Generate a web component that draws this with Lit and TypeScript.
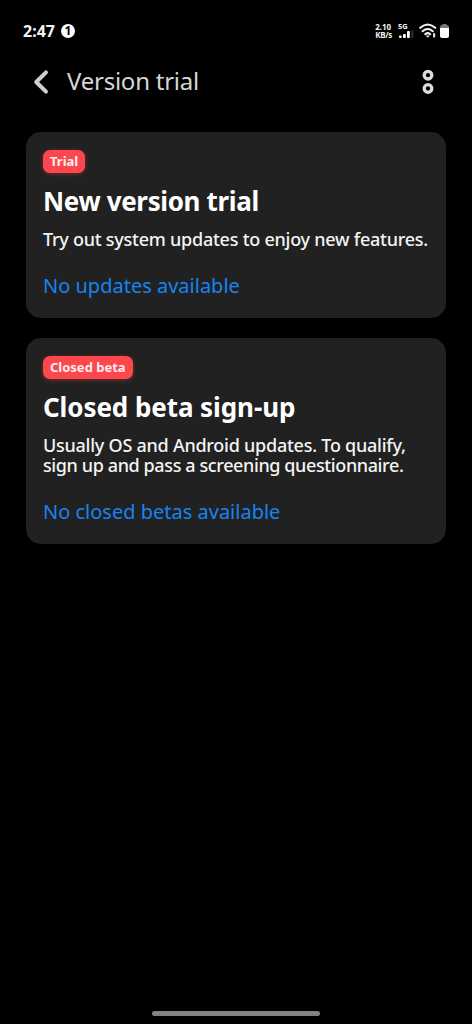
import { LitElement, html, css } from "lit";
import { customElement, property } from "lit/decorators.js";

@customElement("trial-card")
class TrialCard extends LitElement {
  @property() tag = "";
  @property() heading = "";
  @property({ attribute: false }) lines: string[] = [];
  @property() status = "";

  static styles = css`
    :host {
      display: flex;
      flex-direction: column;
      align-items: flex-start;
      box-sizing: border-box;
      background: #212121;
      border-radius: 15px;
      padding: 18px 17px 18px;
      color: #fff;
      white-space: nowrap;
    }
    .tag {
      height: 23px;
      padding: 0 7px;
      border-radius: 7px;
      background: #fd474e;
      box-shadow: 0 1px 4px rgba(253, 71, 78, 0.4);
      color: #ffeeee;
      font-size: 13px;
      font-weight: 700;
      line-height: 23px;
    }
    .heading {
      margin: 10px 0 0;
      font-size: 26px;
      font-weight: 700;
      line-height: 36px;
    }
    :host(:first-child) .heading {
      letter-spacing: -0.36px;
    }
    :host(:last-child) .heading {
      letter-spacing: -0.08px;
    }
    .text {
      margin: 10px 0 0;
      color: #f4f4f4;
      font-size: 18px;
      font-weight: 500;
      line-height: 20.5px;
      letter-spacing: -0.25px;
    }
    .line {
      display: block;
    }
    .line + .line {
      letter-spacing: -0.39px;
    }
    .status {
      margin-top: 22px;
      color: #1784f0;
      font-size: 20px;
      font-weight: 400;
      line-height: 28px;
    }
  `;

  render() {
    return html`
      <span class="tag">${this.tag}</span>
      <h2 class="heading">${this.heading}</h2>
      <p class="text">${this.lines.map((l) => html`<span class="line">${l}</span>`)}</p>
      <span class="status">${this.status}</span>
    `;
  }
}

@customElement("app-root")
class AppRoot extends LitElement {
  static styles = css`
    :host {
      display: flex;
      flex-direction: column;
      box-sizing: border-box;
      height: 100vh;
      background: #000;
      font-family: "Noto Sans", "Open Sans", sans-serif;
      overflow: hidden;
    }
    .statusbar {
      display: flex;
      align-items: center;
      height: 61px;
      padding: 0 23px 0 23px;
      color: #f2f2f2;
      font-weight: 700;
      white-space: nowrap;
    }
    .time {
      font-size: 16px;
      line-height: 20px;
    }
    .count {
      width: 14px;
      height: 14px;
      margin-left: 6px;
      border-radius: 50%;
      background: #fff;
      color: #000;
      font-size: 12px;
      line-height: 14px;
      text-align: center;
    }
    .rate {
      display: flex;
      flex-direction: column;
      margin-left: auto;
      font-size: 8px;
      line-height: 8px;
    }
    .rate .unit {
      letter-spacing: -0.3px;
    }
    .signal {
      display: flex;
      flex-direction: column;
      margin-left: 6px;
      font-size: 7.5px;
      line-height: 8px;
    }
    svg {
      display: block;
    }
    .wifi {
      margin-left: 4px;
    }
    .battery {
      margin-left: 3px;
    }
    .header {
      display: flex;
      align-items: center;
      height: 42px;
      padding: 0 37px 0 32px;
    }
    .title {
      margin: -2px auto 0 17px;
      color: #d6d6d6;
      font-size: 24px;
      font-weight: 400;
      line-height: 34px;
      letter-spacing: -0.24px;
      white-space: nowrap;
    }
    .cards {
      display: flex;
      flex-direction: column;
      gap: 20px;
      padding: 29px 26px 0;
    }
    .home {
      width: 168px;
      height: 5px;
      margin: auto auto 8px;
      border-radius: 3px;
      background: #828282;
    }
  `;

  render() {
    return html`
      <div class="statusbar">
        <span class="time">2:47</span>
        <span class="count">1</span>
        <div class="rate"><span class="value">2.10</span><span class="unit">KB/s</span></div>
        <div class="signal">
          <span>5G</span>
          <svg width="17" height="9" viewBox="0 0 17 9">
            <g fill="#fff">
              <rect x="1" y="5.5" width="2.6" height="2.5" rx=".8" />
              <rect x="5" y="4" width="2.8" height="4" rx=".8" />
              <rect x="9" y="1" width="2.8" height="7" rx=".8" />
            </g>
            <rect x="13.2" y="0" width="2.2" height="8" rx=".8" fill="#2c2c2c" />
          </svg>
        </div>
        <svg class="wifi" width="18" height="16" viewBox="0 0 18 16">
          <g fill="none" stroke="#f2f2f2" stroke-width="2.1" stroke-linecap="round">
            <path d="M1.2 4.8Q8.700 -1.800 16.200 4.800" />
            <path d="M3.600 8.200Q8.700 3.800 13.800 8.200" />
            <path d="M6.200 11.200Q8.700 9.200 11.200 11.200" />
          </g>
          <path d="M6.600 12.400h4.200l-2.100 2.400z" fill="#f2f2f2" />
          <rect x="14" y="10" width="2.200" height="4.600" rx="1" fill="#ddd" />
        </svg>
        <svg class="battery" width="9" height="16" viewBox="0 0 9 16">
          <path d="M2.500 1h4v1h.7Q9 2.400 9 4v1.500H0V4Q0 2.400 1.800 2h.7z" fill="#777" />
          <path d="M0 5h9v8q0 2-2 2H2q-2 0-2-2z" fill="#fff" />
        </svg>
      </div>
      <header class="header">
        <svg width="18" height="26" viewBox="0 0 18 26">
          <path d="M14 3.400L4.200 13L14 22.600" fill="none" stroke="#cfcfcf" stroke-width="4" stroke-linecap="round" stroke-linejoin="round" />
        </svg>
        <h1 class="title">Version trial</h1>
        <svg width="14" height="26" viewBox="0 0 14 26">
          <g fill="none" stroke="#dcdcdc" stroke-width="3.300">
            <circle cx="7" cy="6.200" r="3.800" />
            <circle cx="7" cy="19.500" r="3.800" />
          </g>
        </svg>
      </header>
      <main class="cards">
        <trial-card
          tag="Trial"
          heading="New version trial"
          .lines=${["Try out system updates to enjoy new features."]}
          status="No updates available"
        ></trial-card>
        <trial-card
          tag="Closed beta"
          heading="Closed beta sign-up"
          .lines=${["Usually OS and Android updates. To qualify,", "sign up and pass a screening questionnaire."]}
          status="No closed betas available"
        ></trial-card>
      </main>
      <div class="home"></div>
    `;
  }
}
